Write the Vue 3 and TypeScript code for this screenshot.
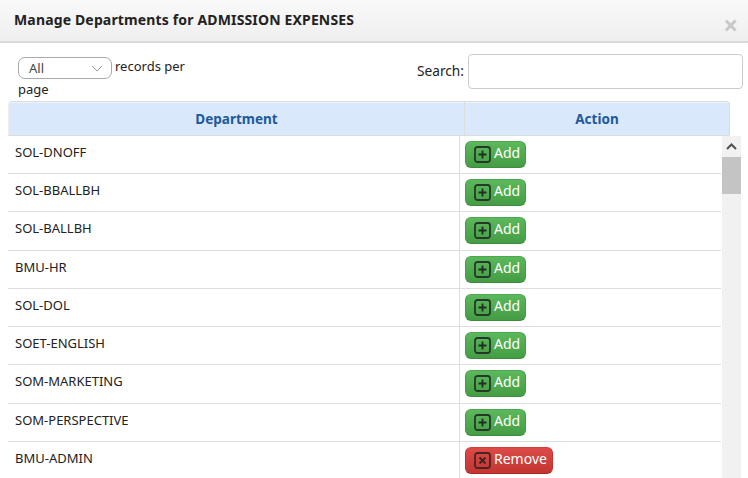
<script setup lang="ts">
interface Row { name: string; added: boolean }
const rows: Row[] = [
  { name: 'SOL-DNOFF', added: false },
  { name: 'SOL-BBALLBH', added: false },
  { name: 'SOL-BALLBH', added: false },
  { name: 'BMU-HR', added: false },
  { name: 'SOL-DOL', added: false },
  { name: 'SOET-ENGLISH', added: false },
  { name: 'SOM-MARKETING', added: false },
  { name: 'SOM-PERSPECTIVE', added: false },
  { name: 'BMU-ADMIN', added: true },
]
</script>

<template>
  <div class="modal">
    <header class="head">
      <h1>Manage Departments for ADMISSION EXPENSES</h1>
      <span class="close">×</span>
    </header>
    <div class="controls">
      <div class="length">
        <span class="select">
          <span class="sel-text">All</span>
          <svg width="12" height="7" viewBox="0 0 12 7"><path d="M1 1l5 5 5-5" fill="none" stroke="#999" stroke-width="1" /></svg>
        </span>
        <span class="len-text">records per page</span>
      </div>
      <label class="search"><span class="search-text">Search:</span><input type="text" /></label>
    </div>
    <div class="thead">
      <div class="th dept">Department</div>
      <div class="th act">Action</div>
    </div>
    <div class="scroll">
      <div class="tbody">
        <div v-for="r in rows" :key="r.name" class="row">
          <div class="name">{{ r.name }}</div>
          <div class="action">
            <button class="btn" :class="r.added ? 'red' : 'green'">
              <svg class="ico" width="17" height="17" viewBox="0 0 17 17">
                <rect x="1" y="1" width="15" height="15" rx="2.5" fill="none" :stroke="r.added ? '#4a2422' : '#26382a'" stroke-width="1.8" />
                <path v-if="r.added" d="M5.5 5.5l6 6M11.5 5.5l-6 6" stroke="#3b2422" stroke-width="1.9" />
                <path v-else d="M8.5 4.5v8M4.5 8.5h8" stroke="#1f2e20" stroke-width="1.8" />
              </svg>
              <span class="label">{{ r.added ? 'Remove' : 'Add' }}</span>
            </button>
          </div>
        </div>
      </div>
      <div class="bar">
        <div class="arrow">
          <svg width="11" height="7" viewBox="0 0 11 7"><path d="M1 6l4.5-4.5L10 6" fill="none" stroke="#505050" stroke-width="2" /></svg>
        </div>
        <div class="thumb"></div>
      </div>
    </div>
  </div>
</template>

<style>
html, body { margin: 0; background: #fff; overflow: hidden; }
</style>

<style scoped>
.modal {
  width: 748px;
  height: 478px;
  overflow: hidden;
  font-family: "Noto Sans", "Open Sans", sans-serif;
  font-size: 13px;
  color: #222;
  background: #fff;
}
.head {
  position: relative;
  display: flex;
  align-items: flex-start;
  background: linear-gradient(#f9f9f9, #efefef);
  border-bottom: 2px solid #d9d9d9;
  padding: 10px 14px 0;
  height: 31px;
}
.head h1 {
  margin: 0;
  font-size: 14px;
  line-height: 19px;
  font-weight: 700;
  letter-spacing: 0.15px;
  color: #222;
}
.close {
  position: absolute;
  right: 10px;
  top: 11px;
  font-size: 26px;
  line-height: 28px;
  font-weight: 700;
  color: #c8c8c8;
}
.controls {
  display: flex;
  justify-content: space-between;
  padding: 12px 5px 0 18px;
  height: 46px;
}
.length {
  width: 170px;
  line-height: 23px;
  padding-top: 2px;
}
.select {
  display: inline-flex;
  align-items: center;
  justify-content: space-between;
  box-sizing: border-box;
  width: 94px;
  height: 22px;
  border: 1px solid #aaa;
  border-radius: 7px;
  padding: 0 8px 0 10px;
  vertical-align: top;
  color: #444;
}
.len-text {
  position: relative;
  top: -2px;
  margin-left: 3px;
}
.search {
  display: flex;
  align-items: flex-start;
  gap: 4px;
  margin-top: -1px;
  height: 36px;
}
.search-text {
  font-size: 13.7px;
  line-height: 34px;
}
.search input {
  width: 275px;
  height: 35px;
  box-sizing: border-box;
  border: 1px solid #ccc;
  border-radius: 4px;
  margin: 0;
  padding: 0;
  background: #fff;
}
.thead {
  display: flex;
  width: 722px;
  margin-left: 8px;
  height: 35px;
  box-sizing: border-box;
  background: #dae8fc;
  border: 1px solid #dcdcdc;
  border-left-color: #e9eef5;
  border-radius: 4px 4px 0 0;
  box-shadow: inset 0 1px 0 #eef4fd;
}
.th {
  display: flex;
  align-items: center;
  justify-content: center;
  font-weight: 700;
  font-size: 13.5px;
  color: #1c5a9c;
}
.dept { width: 455px; border-right: 1px solid #dcdcdc; }
.act { flex: 1; }
.scroll {
  display: flex;
  margin-left: 8px;
  margin-top: -0.1px;
  width: 733px;
  align-items: flex-start;
  gap: 1px;
}
.tbody { width: 713px; }
.row {
  display: flex;
  height: 38.25px;
  box-sizing: border-box;
  border-bottom: 1px solid #dedede;
}
.name {
  width: 452px;
  box-sizing: border-box;
  padding: 6px 0 0 7px;
  line-height: 20px;
  border-right: 1px solid #dedede;
}
.action {
  flex: 1;
  padding: 5px 0 0 5px;
}
.btn {
  display: inline-flex;
  align-items: flex-start;
  gap: 3px;
  height: 27px;
  box-sizing: border-box;
  border: 1px solid transparent;
  border-radius: 6px;
  padding: 0 0 0 8px;
  font: inherit;
  font-size: 14px;
  color: #fff;
  margin: 0;
}
.ico { margin-top: 4px; flex: none; }
.label { line-height: 21px; margin-top: 0; }
.green {
  width: 61px;
  background: linear-gradient(#5cb85c, #449d44);
  border-color: #4ca84c #449d44 #3d8b3d;
}
.red {
  width: 88px;
  background: linear-gradient(#dc4b47, #c23531);
  border-color: #d43f3a #c9302c #ac2925;
}
.bar {
  width: 19px;
  height: 360px;
  background: #f1f1f1;
}
.arrow {
  height: 21px;
  display: flex;
  align-items: center;
  justify-content: center;
}
.thumb { height: 37px; background: #c4c4c4; }
</style>
